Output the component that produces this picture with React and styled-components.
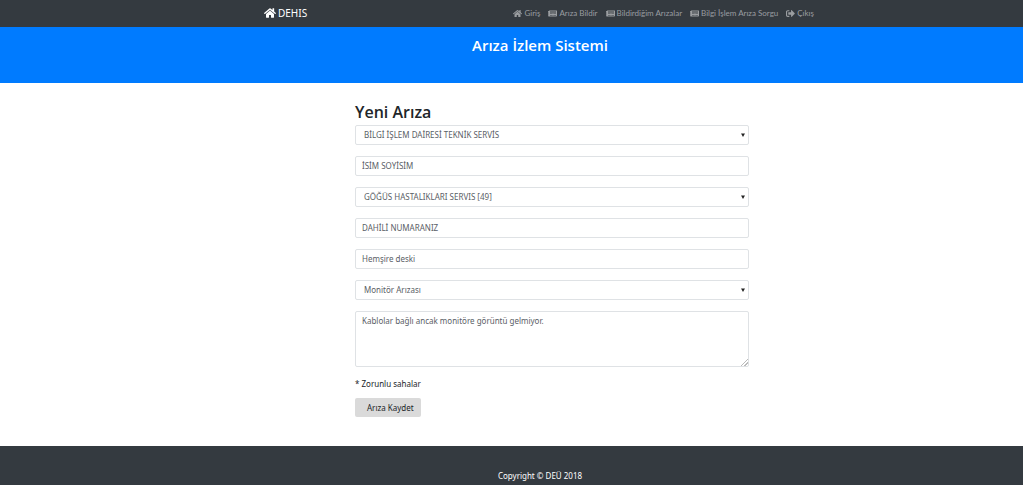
import React from 'react'
import styled, { createGlobalStyle } from 'styled-components'
import { FaHome, FaNewspaper, FaSignOutAlt } from 'react-icons/fa'

const App = () => {
  return (
    <>
      <GlobalStyle />
      <Page>
        <Navbar>
          <Container>
            <Brand href="#"><FaHome />DEHIS</Brand>
            <Links>
              <NavLink href="#giris"><FaHome />Giriş</NavLink>
              <NavLink href="#bildir"><FaNewspaper />Arıza Bildir</NavLink>
              <NavLink href="#arizalar"><FaNewspaper />Bildirdiğim Arızalar</NavLink>
              <NavLink href="#sorgu"><FaNewspaper />Bilgi İşlem Arıza Sorgu</NavLink>
              <NavLink href="#cikis"><FaSignOutAlt />Çıkış</NavLink>
            </Links>
          </Container>
        </Navbar>
        <Banner>
          <BannerTitle>Arıza İzlem Sistemi</BannerTitle>
        </Banner>
        <Main>
          <Container>
            <Form onSubmit={(e) => e.preventDefault()}>
              <Heading>Yeni Arıza</Heading>
              <Fields>
                <SelectField label="Birim" value="BİLGİ İŞLEM DAİRESİ TEKNİK SERVİS" />
                <Input aria-label="İsim Soyisim" placeholder="İSİM SOYİSİM" />
                <SelectField label="Servis" value="GÖĞÜS HASTALIKLARI SERVIS [49]" />
                <Input aria-label="Dahili Numaranız" placeholder="DAHİLİ NUMARANIZ" />
                <Input aria-label="Yer" defaultValue="Hemşire deski" />
                <SelectField label="Arıza türü" value="Monitör Arızası" />
                <TextArea aria-label="Açıklama" defaultValue="Kablolar bağlı ancak monitöre görüntü gelmiyor." />
              </Fields>
              <Note>* Zorunlu sahalar</Note>
              <SaveButton type="submit">Arıza Kaydet</SaveButton>
            </Form>
          </Container>
        </Main>
        <Footer>Copyright © DEÜ 2018</Footer>
      </Page>
    </>
  )
}

const SelectField = ({ label, value }) => (
  <SelectWrap>
    <Select aria-label={label} defaultValue={value}>
      <option>{value}</option>
    </Select>
    <Arrow viewBox="0 0 4 4" aria-hidden="true"><path d="M0 0.5h4L2 4z" /></Arrow>
  </SelectWrap>
)

export default App

const GlobalStyle = createGlobalStyle`
    * {
        box-sizing: border-box;
    }
    body {
        margin: 0;
        background: #fff;
        color: #212529;
        font-family: "Noto Sans", "Open Sans", sans-serif;
        font-size: 8px;
        line-height: 12px;
    }
    input, select, textarea, button {
        font: inherit;
    }
`
const Page = styled.div`
    display: flex;
    flex-direction: column;
    min-height: 100vh;
`
const Navbar = styled.nav`
    padding: 5px 0 6px 57px;
    background: #343a40;
`
const Container = styled.div`
    display: flex;
    align-items: center;
    justify-content: space-between;
    max-width: 552px;
    margin: 0 auto;
`
const Brand = styled.a`
    display: flex;
    align-items: center;
    gap: 2px;
    color: #fff;
    font-size: 10px;
    line-height: 16px;
    text-decoration: none;
    svg {
        width: 12px;
        height: 12px;
    }
`
const Links = styled.div`
    display: flex;
    gap: 8px;
    margin-right: 2px;
`
const NavLink = styled.a`
    display: flex;
    align-items: center;
    gap: 2px;
    color: #9a9da0;
    font-family: Lato, "Open Sans", sans-serif;
    text-decoration: none;
    white-space: nowrap;
    svg {
        width: 9px;
        height: 9px;
    }
`
const Banner = styled.header`
    padding: 7px 0 27px 57px;
    background: #007bff;
    color: #fff;
    font-family: "Open Sans", "Noto Sans", sans-serif;
    text-align: center;
`
const BannerTitle = styled.h1`
    margin: 0;
    font-size: 15px;
    font-weight: 600;
    line-height: 22px;
`
const Main = styled.main`
    flex: 1;
    padding: 18px 0 29px 57px;
`
const Form = styled.form`
    flex: 1;
    padding: 0 67px 0 91px;
`
const Heading = styled.h2`
    margin: 0 0 2px;
    font-family: "Open Sans", "Noto Sans", sans-serif;
    font-size: 16px;
    font-weight: 600;
    line-height: 22px;
`
const Fields = styled.div`
    display: flex;
    flex-direction: column;
    gap: 11px;
`
const Input = styled.input`
    width: 100%;
    height: 20px;
    padding: 0 6px 1px;
    border: 1px solid #dfe2e5;
    border-radius: 2px;
    background: #fff;
    color: #5a6066;
    &::placeholder {
        color: #5a6066;
        opacity: 1;
    }
`
const SelectWrap = styled.div`
    display: grid;
    align-items: center;
`
const Select = styled(Input).attrs({ as: 'select' })`
    grid-area: 1 / 1;
    padding: 0 8px;
    appearance: none;
`
const Arrow = styled.svg`
    grid-area: 1 / 1;
    justify-self: end;
    width: 4px;
    height: 4px;
    margin-right: 4px;
    fill: #222;
    pointer-events: none;
`
const TextArea = styled(Input).attrs({ as: 'textarea' })`
    display: block;
    height: 56px;
    padding: 3px 6px;
    resize: vertical;
    &::-webkit-resizer {
        background: linear-gradient(135deg, transparent 74%, #bbb 74%, #bbb 79%, transparent 79%, transparent 86%, #bbb 86%, #bbb 91%, transparent 91%);
    }
`
const Note = styled.p`
    margin: 11px 0 8px;
`
const SaveButton = styled.button`
    display: block;
    height: 19px;
    padding: 0 7px 0 12px;
    border: 0;
    border-radius: 2px;
    background: #dadada;
    color: #212529;
    cursor: pointer;
`
const Footer = styled.footer`
    padding: 24px 0 3px 57px;
    background: #343a40;
    color: #fff;
    text-align: center;
`
